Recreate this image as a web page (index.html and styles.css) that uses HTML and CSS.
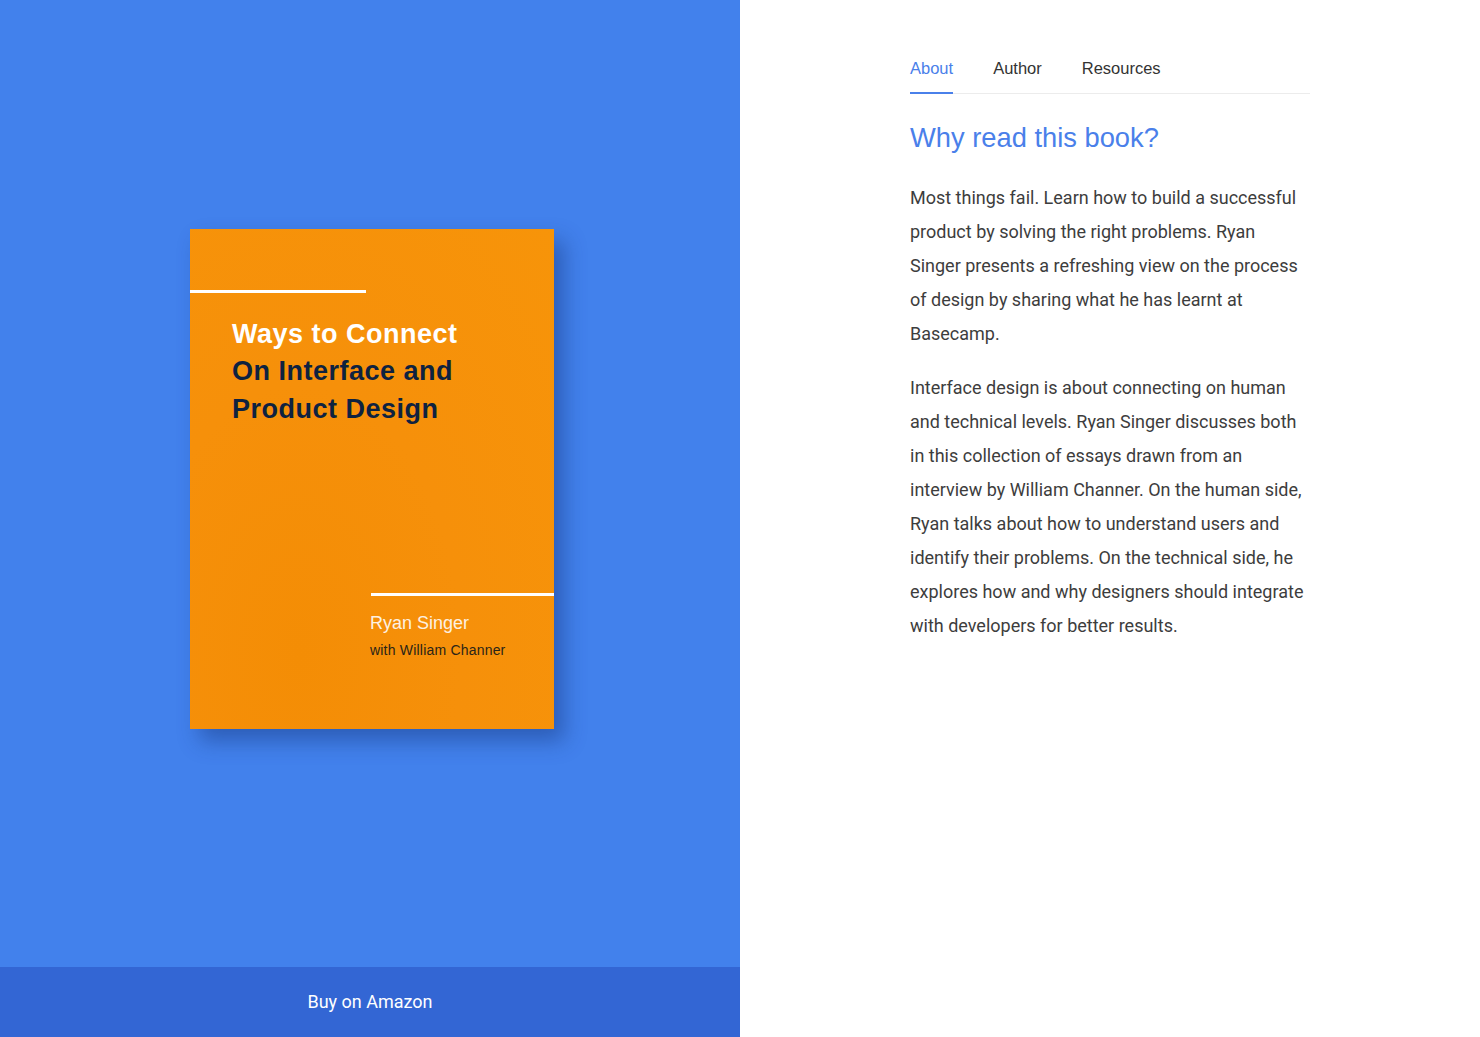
FILE: index.html
```html
<!DOCTYPE html>
<html lang="en">
<head>
  <meta charset="UTF-8" />
  <title>Interface and Product Design</title>
  <link rel="stylesheet" href="styles.css">
</head>
<body>

  <div class="cover-side">
    <div class="cover-stage">
      <div class="book">
        <div class="book-rule"></div>
        <h2 class="book-title">
          <span class="light">Ways to Connect</span>
          On Interface and
          Product Design
        </h2>
        <div class="book-footer">
          <div class="book-rule-right"></div>
          <div class="book-author">Ryan Singer</div>
          <div class="book-with">with William Channer</div>
        </div>
      </div>
    </div>
    <a class="buy" href="#">Buy on Amazon</a>
  </div>

  <div class="info-side">
    <div class="info">
      <nav class="tabs">
        <a class="tab active" href="#">About</a>
        <a class="tab" href="#">Author</a>
        <a class="tab" href="#">Resources</a>
      </nav>

      <h1>Why read this book?</h1>
      <p>
        Most things fail. Learn how to build a successful product by solving the right problems. Ryan Singer presents a refreshing view on the process of design by sharing what he has learnt at Basecamp.
      </p>
      <p>
        Interface design is about connecting on human and technical levels. Ryan Singer discusses both in this collection of essays drawn from an interview by William Channer. On the human side, Ryan talks about how to understand users and identify their problems. On the technical side, he explores how and why designers should integrate with developers for better results.
      </p>
    </div>
  </div>

</body>
</html>
```

FILE: styles.css
```css
* {
  box-sizing: border-box;
}

html, body {
  margin: 0;
  height: 100%;
}

body {
  display: flex;
  font-family: Roboto, 'Liberation Sans', sans-serif;
  background: #fff;
  color: #3d3d3d;
}

/* left */

.cover-side {
  width: 740px;
  height: 100%;
  display: flex;
  flex-direction: column;
  background: #4281ec;
}

.cover-stage {
  flex: 1;
  display: flex;
  align-items: center;
  justify-content: center;
  padding: 0 0 10px 4px;
}

.book {
  width: 364px;
  height: 500px;
  position: relative;
  background: radial-gradient(ellipse at 30% 85%, #f48d05 0%, #f6900a 45%, #f79409 100%);
  box-shadow: 10px 12px 20px rgba(20, 50, 120, 0.45);
  padding-top: 61px;
}

.book-rule {
  width: 176px;
  height: 3px;
  background: #fff;
}

.book-title {
  margin: 23px 0 0 42px;
  font-family: 'Liberation Sans', sans-serif;
  font-weight: bold;
  font-size: 27px;
  line-height: 37.5px;
  letter-spacing: 0.5px;
  color: #0e2240;
}

.book-title .light {
  display: block;
  color: #fff;
}

.book-footer {
  position: absolute;
  left: 180px;
  right: 0;
  top: 364px;
}

.book-rule-right {
  height: 3px;
  background: #fff;
  margin-left: 1px;
}

.book-author {
  margin-top: 17px;
  font-family: 'Liberation Sans', sans-serif;
  font-size: 18px;
  color: #fdf1e2;
}

.book-with {
  margin-top: 8px;
  font-family: 'Liberation Sans', sans-serif;
  font-size: 14px;
  letter-spacing: 0.2px;
  color: #2a2418;
}

.buy {
  height: 70px;
  display: flex;
  align-items: center;
  justify-content: center;
  padding-bottom: 2px;
  background: #3366d4;
  color: #fff;
  font-size: 18px;
  text-decoration: none;
}

/* right */

.info-side {
  flex: 1;
  display: flex;
  justify-content: center;
  padding-top: 59px;
}

.info {
  width: 400px;
}

.tabs {
  display: flex;
  gap: 40px;
  border-bottom: 1px solid #ececec;
}

.tab {
  font-family: 'Liberation Sans', sans-serif;
  font-size: 16.5px;
  color: #333;
  text-decoration: none;
  padding-bottom: 14px;
  margin-bottom: -1px;
  border-bottom: 2px solid transparent;
}

.tab.active {
  color: #4a80ea;
  border-bottom-color: #4a80ea;
}

h1 {
  margin: 28px 0 27px;
  font-family: 'Liberation Sans', sans-serif;
  font-weight: normal;
  font-size: 27.3px;
  color: #4a80ea;
}

p {
  margin: 0 0 20px;
  font-size: 18px;
  line-height: 34px;
}
```
